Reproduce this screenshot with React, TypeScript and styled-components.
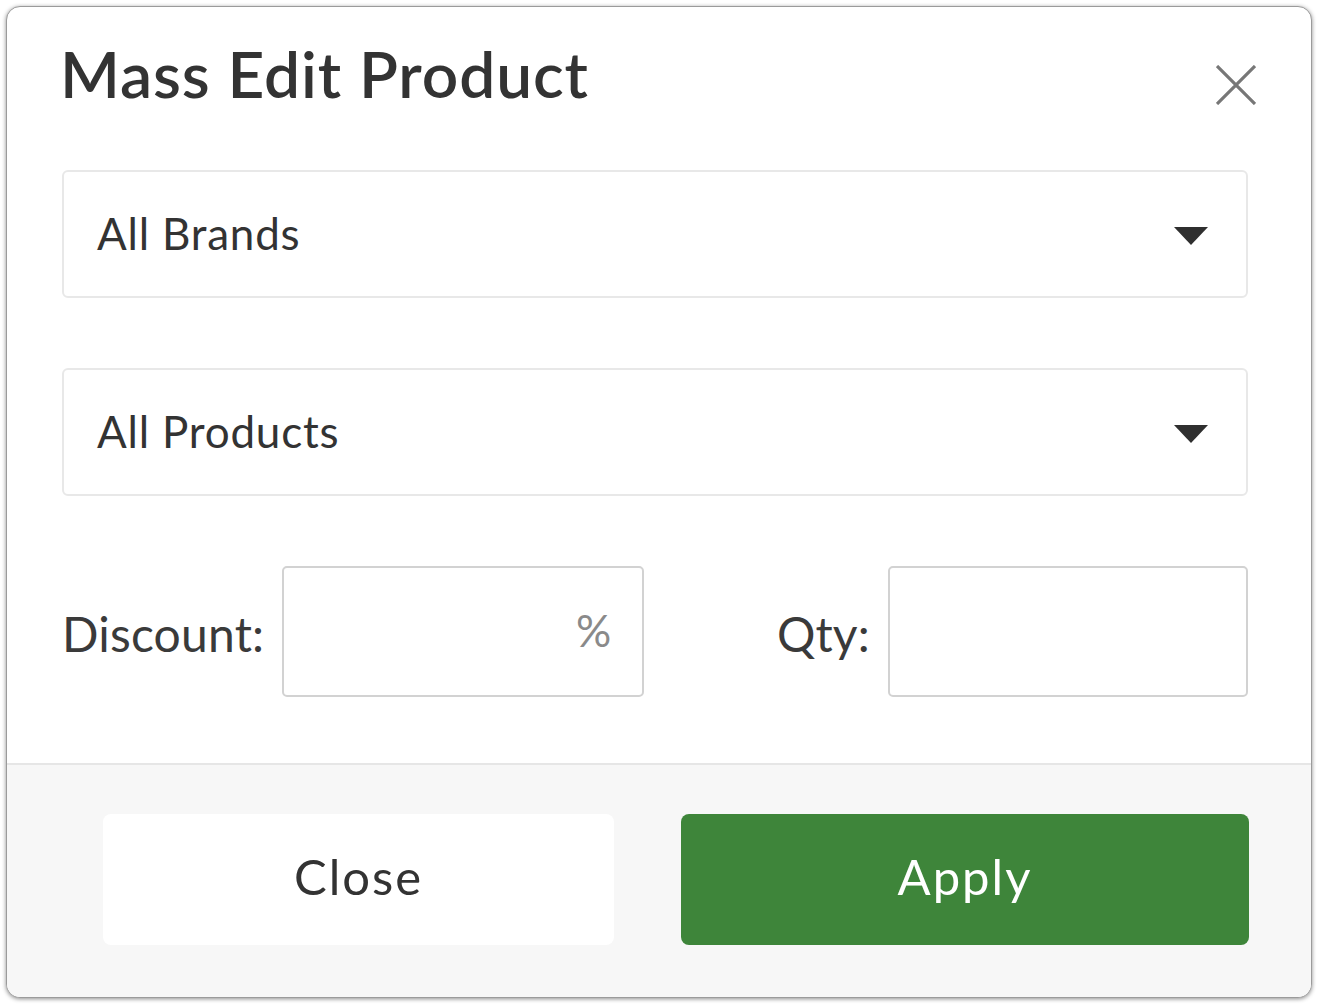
import React from 'react';
import styled, { createGlobalStyle } from 'styled-components';

const GlobalStyle = createGlobalStyle`
    html, body {
        margin: 0;
        padding: 0;
        background: #ffffff;
    }
    body {
        font-family: Lato, "Open Sans", sans-serif;
        color: #333333;
    }
`;

const Page = styled.div`
    box-sizing: border-box;
    width: 1319px;
    height: 1005px;
    padding: 6px 7px 7px 6px;
`;

const Modal = styled.div`
    box-sizing: border-box;
    height: 100%;
    display: flex;
    flex-direction: column;
    background: #ffffff;
    border: 1px solid #9b9b9b;
    border-radius: 14px;
    box-shadow: 0 1px 4px rgba(0, 0, 0, 0.45);
    overflow: hidden;
`;

const Body = styled.div`
    flex: 1;
    padding: 0 63px 0 55px;
    display: flex;
    flex-direction: column;
`;

const Header = styled.div`
    height: 163px;
    display: flex;
    justify-content: space-between;
    align-items: flex-start;
`;

const Title = styled.h1`
    margin: 35px 0 0 -2px;
    font-size: 64px;
    line-height: 64px;
    font-weight: 600;
    color: #333333;
    letter-spacing: 0.9px;
`;

const CloseIcon = styled.button`
    margin: 58px -8px 0 0;
    width: 40px;
    height: 40px;
    padding: 0;
    border: none;
    background: none;
    cursor: pointer;
    display: flex;
`;

const Select = styled.div`
    box-sizing: border-box;
    height: 128px;
    display: flex;
    align-items: center;
    justify-content: space-between;
    padding: 0 38px 3px 33px;
    border: 2px solid #e8e8e8;
    border-radius: 6px;
    font-size: 44px;
    letter-spacing: 0.8px;
    color: #333333;
    margin-bottom: 70px;
`;

const Caret = styled.span`
    width: 0;
    height: 0;
    border-left: 17px solid transparent;
    border-right: 17px solid transparent;
    border-top: 18px solid #2f2f2f;
    margin-top: 7px;
`;

const FieldRow = styled.div`
    display: flex;
    justify-content: space-between;
    align-items: center;
    height: 131px;
`;

const Field = styled.div`
    display: flex;
    align-items: center;
    gap: 18px;
`;

const Label = styled.label`
    font-size: 48px;
    letter-spacing: 0.2px;
    color: #3a3a3a;
    padding-top: 4px;
`;

const InputBox = styled.div<{ $width: number }>`
    box-sizing: border-box;
    width: ${p => p.$width}px;
    height: 131px;
    border: 2px solid #d2d2d2;
    border-radius: 5px;
    display: flex;
    justify-content: flex-end;
    padding: 36px 31px 0 0;
    font-size: 44px;
    color: #8a8a8a;
`;

const Footer = styled.div`
    height: 234px;
    box-sizing: border-box;
    border-top: 2px solid #e6e6e6;
    background: #f7f7f7;
    display: flex;
    align-items: flex-start;
    padding: 49px 62px 0 96px;
    gap: 67px;
`;

const Button = styled.button<{ $primary?: boolean }>`
    height: 131px;
    width: ${p => (p.$primary ? 568 : 511)}px;
    border: none;
    border-radius: 8px;
    padding: 0 0 7px;
    background: ${p => (p.$primary ? '#3e853a' : '#ffffff')};
    color: ${p => (p.$primary ? '#ffffff' : '#333333')};
    font-family: Lato, "Open Sans", sans-serif;
    font-size: 49px;
    letter-spacing: 2px;
    cursor: pointer;
`;

const App = () => {
    return (
        <Page>
            <GlobalStyle />
            <Modal>
                <Body>
                    <Header>
                        <Title>Mass Edit Product</Title>
                        <CloseIcon aria-label="close">
                            <svg width="40" height="40" viewBox="0 0 40 40">
                                <path d="M1 1 L39 39 M39 1 L1 39" stroke="#777777" strokeWidth="3.2" />
                            </svg>
                        </CloseIcon>
                    </Header>
                    <Select>
                        <span>All Brands</span>
                        <Caret />
                    </Select>
                    <Select>
                        <span>All Products</span>
                        <Caret />
                    </Select>
                    <FieldRow>
                        <Field>
                            <Label>Discount:</Label>
                            <InputBox $width={362}>%</InputBox>
                        </Field>
                        <Field>
                            <Label>Qty:</Label>
                            <InputBox $width={360} />
                        </Field>
                    </FieldRow>
                </Body>
                <Footer>
                    <Button>Close</Button>
                    <Button $primary>Apply</Button>
                </Footer>
            </Modal>
        </Page>
    );
};

export default App;
